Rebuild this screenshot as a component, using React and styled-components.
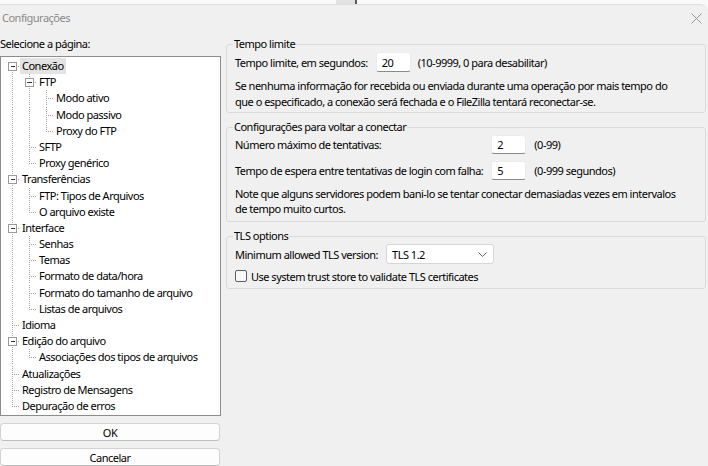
import React from "react";
import styled, { createGlobalStyle } from "styled-components";

const GlobalStyle = createGlobalStyle`
  html, body {
    margin: 0;
    padding: 0;
    background: #f0f0f0;
    overflow: hidden;
  }
  body {
    font-family: "Noto Sans", "Open Sans", sans-serif;
    font-size: 11px;
    letter-spacing: -0.5px;
    color: #000;
  }
`;

const ROW = 16.2;

const Screen = styled.div`
  width: 708px;
  height: 466px;
  overflow: hidden;
  background: #fbfbfb;
`;

const TopStrip = styled.div`
  height: 4px;
  display: flex;
  padding-left: 336px;
  background: #fafafa;
`;

const StripBlock = styled.div`
  width: ${p => p.$w}px;
  background: ${p => p.$c};
`;

const Window = styled.div`
  background: #f0f0f0;
  border-top: 1px solid #dedede;
  border-top-right-radius: 8px;
  height: 461px;
`;

const TitleBar = styled.div`
  height: 26px;
  display: flex;
  align-items: center;
  justify-content: space-between;
  padding: 0 5px 0 2px;
`;

const Title = styled.span`
  color: #8a8a8a;
  line-height: 16px;
`;

const CloseButton = styled.span`
  display: flex;
  align-items: center;
  justify-content: center;
  width: 14px;
  height: 14px;
`;

const Body = styled.div`
  display: flex;
  gap: 5px;
  padding-top: 5px;
`;

const LeftColumn = styled.div`
  width: 221px;
  display: flex;
  flex-direction: column;
`;

const PageLabel = styled.div`
  line-height: 16px;
  margin-bottom: 4px;
`;

const TreeBox = styled.div`
  height: 357px;
  background: #fff;
  border: 1px solid #8c8c8c;
  padding-top: 1px;
  box-sizing: content-box;
`;

const TreeRow = styled.div`
  display: flex;
  align-items: center;
  height: ${ROW}px;
`;

const TreeLabel = styled.span`
  line-height: ${ROW}px;
  padding: 0 2px;
  white-space: nowrap;
  background: ${p => (p.$selected ? "#e3e3e3" : "transparent")};
`;

const Button = styled.div`
  width: 218px;
  height: 16px;
  margin-top: 7px;
  display: flex;
  align-items: center;
  justify-content: center;
  background: #fdfdfd;
  border: 1px solid #d3d3d3;
  border-bottom-color: #bdbdbd;
  border-radius: 4px;
`;

const RightColumn = styled.div`
  width: 480px;
  display: flex;
  flex-direction: column;
  gap: 6px;
`;

const Group = styled.fieldset`
  margin: 0;
  padding: 0 8px ${p => p.$pb}px 8px;
  border: 1px solid #dadada;
  border-radius: 3px;
  min-width: 0;
`;

const Legend = styled.legend`
  padding: 0 1px;
  margin-left: -2px;
  line-height: 16px;
`;

const FieldRow = styled.div`
  display: flex;
  align-items: center;
  height: ${p => p.$h || 20}px;
  margin-top: ${p => p.$mt || 0}px;
  white-space: nowrap;
`;

const FieldGrid = styled.div`
  display: grid;
  grid-template-columns: auto 35px auto 1fr;
  column-gap: 8px;
  row-gap: 7px;
  align-items: center;
  white-space: nowrap;
`;

const NumberInput = styled.input`
  box-sizing: border-box;
  width: 35px;
  height: ${p => p.$h || 19}px;
  margin: 0 ${p => p.$mr || 0}px 0 ${p => p.$ml || 0}px;
  padding: 0 5px;
  border: 1px solid #ececec;
  border-bottom: 1px solid #8a8a8a;
  border-radius: 3px;
  background: #fff;
  font: inherit;
  letter-spacing: inherit;
  color: #000;
  outline: none;
`;

const Paragraph = styled.div`
  margin-top: ${p => p.$mt}px;
  line-height: ${p => p.$lh}px;
  white-space: nowrap;
`;

const Select = styled.div`
  box-sizing: border-box;
  width: 108px;
  height: 20px;
  margin-left: 8px;
  display: flex;
  align-items: center;
  justify-content: space-between;
  padding: 0 6px 0 5px;
  background: #fff;
  border: 1px solid #d6d6d6;
  border-radius: 3px;
`;

const CheckBox = styled.span`
  box-sizing: border-box;
  width: 12px;
  height: 12px;
  margin: 0 4px 0 0;
  border: 1px solid #5c5c5c;
  border-radius: 2px;
  background: #f8f8f8;
`;

const tree = [
  {
    label: "Conexão",
    selected: true,
    children: [
      {
        label: "FTP",
        children: [
          { label: "Modo ativo" },
          { label: "Modo passivo" },
          { label: "Proxy do FTP" },
        ],
      },
      { label: "SFTP" },
      { label: "Proxy genérico" },
    ],
  },
  {
    label: "Transferências",
    children: [{ label: "FTP: Tipos de Arquivos" }, { label: "O arquivo existe" }],
  },
  {
    label: "Interface",
    children: [
      { label: "Senhas" },
      { label: "Temas" },
      { label: "Formato de data/hora" },
      { label: "Formato do tamanho de arquivo" },
      { label: "Listas de arquivos" },
    ],
  },
  { label: "Idioma" },
  {
    label: "Edição do arquivo",
    children: [{ label: "Associações dos tipos de arquivos" }],
  },
  { label: "Atualizações" },
  { label: "Registro de Mensagens" },
  { label: "Depuração de erros" },
];

const flatten = (nodes, level = 0, continues = []) =>
  nodes.flatMap((node, i) => {
    const isLast = i === nodes.length - 1;
    const row = {
      label: node.label,
      selected: node.selected,
      level,
      isLast,
      isFirstRoot: level === 0 && i === 0,
      hasChildren: !!node.children,
      continues,
    };
    return [row, ...(node.children ? flatten(node.children, level + 1, [...continues, !isLast]) : [])];
  });

const rows = flatten(tree);

const dot = { stroke: "#a3a3a3", strokeDasharray: "1 1", shapeRendering: "crispEdges" };

const TreeLines = ({ row }) => {
  const w = 19 + 17 * row.level;
  const cx = 11.5 + 17 * row.level;
  const mid = 8.5;
  return (
    <svg width={w} height={ROW} viewBox={`0 0 ${w} ${ROW}`} style={{ flex: "none" }}>
      {row.continues.map((c, k) =>
        c ? <line key={k} x1={11.5 + 17 * k} y1={0} x2={11.5 + 17 * k} y2={ROW} style={dot} /> : null
      )}
      {!row.isFirstRoot && <line x1={cx} y1={0} x2={cx} y2={mid} style={dot} />}
      {!row.isLast && <line x1={cx} y1={mid} x2={cx} y2={ROW} style={dot} />}
      <line x1={cx} y1={mid} x2={w} y2={mid} style={dot} />
      {row.hasChildren && (
        <g shapeRendering="crispEdges">
          <rect x={cx - 4} y={mid - 4} width={8} height={8} fill="#fff" stroke="#9a9a9a" />
          <line x1={cx - 2} y1={mid} x2={cx + 3} y2={mid} stroke="#333" />
        </g>
      )}
    </svg>
  );
};

export default function App() {
  return (
    <Screen>
      <GlobalStyle />
      <TopStrip>
        <StripBlock $w={19} $c="#e2e2e2" />
        <StripBlock $w={2} $c="#5a5a5a" />
      </TopStrip>
      <Window>
        <TitleBar>
          <Title>Configurações</Title>
          <CloseButton>
            <svg width="11" height="11" viewBox="0 0 11 11">
              <path d="M0.5 0.5 L10.5 10.5 M10.5 0.5 L0.5 10.5" stroke="#9a9a9a" strokeWidth="1" />
            </svg>
          </CloseButton>
        </TitleBar>
        <Body>
          <LeftColumn>
            <PageLabel>Selecione a página:</PageLabel>
            <TreeBox>
              {rows.map(row => (
                <TreeRow key={row.label}>
                  <TreeLines row={row} />
                  <TreeLabel $selected={row.selected}>{row.label}</TreeLabel>
                </TreeRow>
              ))}
            </TreeBox>
            <Button>OK</Button>
            <Button>Cancelar</Button>
          </LeftColumn>
          <RightColumn>
            <Group $pb={2}>
              <Legend>Tempo limite</Legend>
              <FieldRow>
                Tempo limite, em segundos:
                <NumberInput $h={20} $ml={8} $mr={7} readOnly value="20" />
                (10-9999, 0 para desabilitar)
              </FieldRow>
              <Paragraph $mt={6} $lh={16}>
                <div>Se nenhuma informação for recebida ou enviada durante uma operação por mais tempo do</div>
                <div>que o especificado, a conexão será fechada e o FileZilla tentará reconectar-se.</div>
              </Paragraph>
            </Group>
            <Group $pb={5}>
              <Legend>Configurações para voltar a conectar</Legend>
              <FieldGrid>
                <span>Número máximo de tentativas:</span>
                <NumberInput readOnly value="2" />
                <span>(0-99)</span>
                <span />
                <span>Tempo de espera entre tentativas de login com falha:</span>
                <NumberInput readOnly value="5" />
                <span>(0-999 segundos)</span>
                <span />
              </FieldGrid>
              <Paragraph $mt={6} $lh={15}>
                <div>Note que alguns servidores podem bani-lo se tentar conectar demasiadas vezes em intervalos</div>
                <div>de tempo muito curtos.</div>
              </Paragraph>
            </Group>
            <Group $pb={4}>
              <Legend>TLS options</Legend>
              <FieldRow>
                Minimum allowed TLS version:
                <Select>
                  <span>TLS 1.2</span>
                  <svg width="9" height="5" viewBox="0 0 9 5">
                    <path d="M0.5 0.5 L4.5 4.5 L8.5 0.5" fill="none" stroke="#666" strokeWidth="1" />
                  </svg>
                </Select>
              </FieldRow>
              <FieldRow $h={16} $mt={4}>
                <CheckBox />
                Use system trust store to validate TLS certificates
              </FieldRow>
            </Group>
          </RightColumn>
        </Body>
      </Window>
    </Screen>
  );
}
